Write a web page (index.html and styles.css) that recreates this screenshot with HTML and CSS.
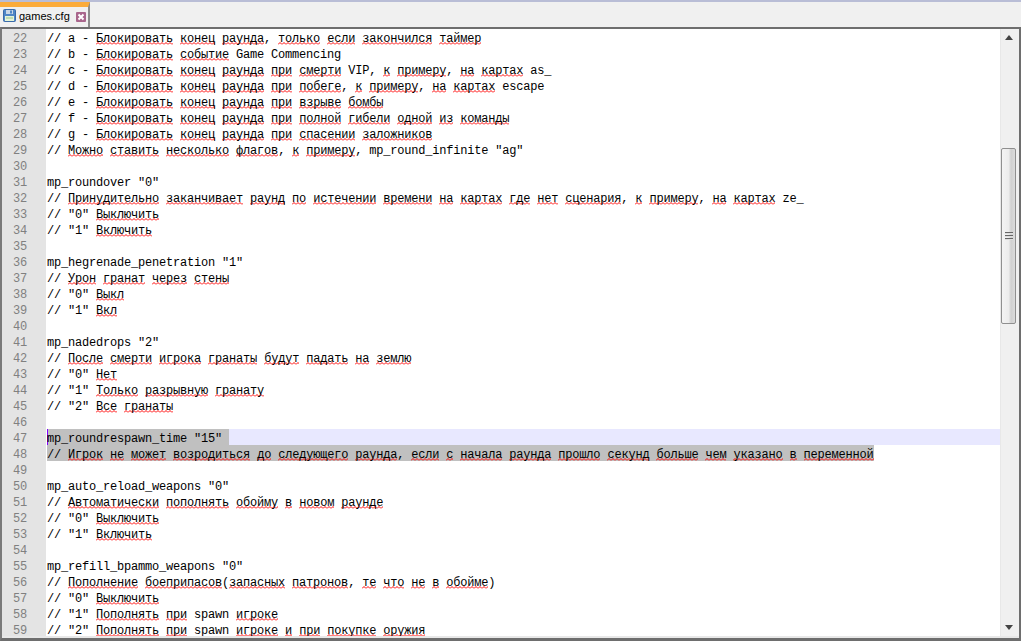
FILE: index.html
```html
<!DOCTYPE html>
<html lang="ru">
<head>
<meta charset="utf-8">
<title>games.cfg</title>
<link rel="stylesheet" href="styles.css">
</head>
<body>
<div class="app">
  <div class="tabbar">
    <div class="tab">
      <svg class="floppy" width="13" height="13" viewBox="0 0 13 13"><rect x="0.5" y="0.5" width="12" height="12" rx="1" fill="#4f86c6" stroke="#3a6aa8"/><rect x="3" y="1" width="7" height="4" fill="#c9d6e6"/><rect x="7" y="1.5" width="2" height="3" fill="#4f86c6"/><rect x="2" y="7" width="9" height="5" fill="#e4f3d8"/><rect x="3" y="8.5" width="7" height="1" fill="#9cc48a"/></svg>
      <span class="tabname">games.cfg</span>
      <svg class="close" width="10" height="10" viewBox="0 0 10 10"><rect width="10" height="10" rx="1" fill="#a9668c"/><path d="M2.500 2.500l5 5M7.500 2.500l-5 5" stroke="#fff" stroke-width="2"/></svg>
    </div>
  </div>
  <div class="editor">
    <div class="code">
      <div class="line"><span class="num">22</span><span class="txt">// a - <u>Блокировать</u> <u>конец</u> <u>раунда</u>, <u>только</u> <u>если</u> <u>закончился</u> <u>таймер</u></span></div>
      <div class="line"><span class="num">23</span><span class="txt">// b - <u>Блокировать</u> <u>событие</u> Game Commencing</span></div>
      <div class="line"><span class="num">24</span><span class="txt">// c - <u>Блокировать</u> <u>конец</u> <u>раунда</u> <u>при</u> <u>смерти</u> VIP, <u>к</u> <u>примеру</u>, <u>на</u> <u>картах</u> as_</span></div>
      <div class="line"><span class="num">25</span><span class="txt">// d - <u>Блокировать</u> <u>конец</u> <u>раунда</u> <u>при</u> <u>побеге</u>, <u>к</u> <u>примеру</u>, <u>на</u> <u>картах</u> escape</span></div>
      <div class="line"><span class="num">26</span><span class="txt">// e - <u>Блокировать</u> <u>конец</u> <u>раунда</u> <u>при</u> <u>взрыве</u> <u>бомбы</u></span></div>
      <div class="line"><span class="num">27</span><span class="txt">// f - <u>Блокировать</u> <u>конец</u> <u>раунда</u> <u>при</u> <u>полной</u> <u>гибели</u> <u>одной</u> <u>из</u> <u>команды</u></span></div>
      <div class="line"><span class="num">28</span><span class="txt">// g - <u>Блокировать</u> <u>конец</u> <u>раунда</u> <u>при</u> <u>спасении</u> <u>заложников</u></span></div>
      <div class="line"><span class="num">29</span><span class="txt">// <u>Можно</u> <u>ставить</u> <u>несколько</u> <u>флагов</u>, <u>к</u> <u>примеру</u>, mp_round_infinite "ag"</span></div>
      <div class="line"><span class="num">30</span><span class="txt"></span></div>
      <div class="line"><span class="num">31</span><span class="txt">mp_roundover "0"</span></div>
      <div class="line"><span class="num">32</span><span class="txt">// <u>Принудительно</u> <u>заканчивает</u> <u>раунд</u> <u>по</u> <u>истечении</u> <u>времени</u> <u>на</u> <u>картах</u> <u>где</u> <u>нет</u> <u>сценария</u>, <u>к</u> <u>примеру</u>, <u>на</u> <u>картах</u> ze_</span></div>
      <div class="line"><span class="num">33</span><span class="txt">// "0" <u>Выключить</u></span></div>
      <div class="line"><span class="num">34</span><span class="txt">// "1" <u>Включить</u></span></div>
      <div class="line"><span class="num">35</span><span class="txt"></span></div>
      <div class="line"><span class="num">36</span><span class="txt">mp_hegrenade_penetration "1"</span></div>
      <div class="line"><span class="num">37</span><span class="txt">// <u>Урон</u> <u>гранат</u> <u>через</u> <u>стены</u></span></div>
      <div class="line"><span class="num">38</span><span class="txt">// "0" <u>Выкл</u></span></div>
      <div class="line"><span class="num">39</span><span class="txt">// "1" <u>Вкл</u></span></div>
      <div class="line"><span class="num">40</span><span class="txt"></span></div>
      <div class="line"><span class="num">41</span><span class="txt">mp_nadedrops "2"</span></div>
      <div class="line"><span class="num">42</span><span class="txt">// <u>После</u> <u>смерти</u> <u>игрока</u> <u>гранаты</u> <u>будут</u> <u>падать</u> <u>на</u> <u>землю</u></span></div>
      <div class="line"><span class="num">43</span><span class="txt">// "0" <u>Нет</u></span></div>
      <div class="line"><span class="num">44</span><span class="txt">// "1" <u>Только</u> <u>разрывную</u> <u>гранату</u></span></div>
      <div class="line"><span class="num">45</span><span class="txt">// "2" <u>Все</u> <u>гранаты</u></span></div>
      <div class="line"><span class="num">46</span><span class="txt"></span></div>
      <div class="line current"><span class="num">47</span><span class="txt"><span class="sel caret">mp_roundrespawn_time "15" </span></span></div>
      <div class="line"><span class="num">48</span><span class="txt"><span class="sel">// <u>Игрок</u> <u>не</u> <u>может</u> <u>возродиться</u> <u>до</u> <u>следующего</u> <u>раунда</u>, <u>если</u> <u>с</u> <u>начала</u> <u>раунда</u> <u>прошло</u> <u>секунд</u> <u>больше</u> <u>чем</u> <u>указано</u> <u>в</u> <u>переменной</u></span></span></div>
      <div class="line"><span class="num">49</span><span class="txt"></span></div>
      <div class="line"><span class="num">50</span><span class="txt">mp_auto_reload_weapons "0"</span></div>
      <div class="line"><span class="num">51</span><span class="txt">// <u>Автоматически</u> <u>пополнять</u> <u>обойму</u> <u>в</u> <u>новом</u> <u>раунде</u></span></div>
      <div class="line"><span class="num">52</span><span class="txt">// "0" <u>Выключить</u></span></div>
      <div class="line"><span class="num">53</span><span class="txt">// "1" <u>Включить</u></span></div>
      <div class="line"><span class="num">54</span><span class="txt"></span></div>
      <div class="line"><span class="num">55</span><span class="txt">mp_refill_bpammo_weapons "0"</span></div>
      <div class="line"><span class="num">56</span><span class="txt">// <u>Пополнение</u> <u>боеприпасов</u>(<u>запасных</u> <u>патронов</u>, <u>те</u> <u>что</u> <u>не</u> <u>в</u> <u>обойме</u>)</span></div>
      <div class="line"><span class="num">57</span><span class="txt">// "0" <u>Выключить</u></span></div>
      <div class="line"><span class="num">58</span><span class="txt">// "1" <u>Пополнять</u> <u>при</u> spawn <u>игроке</u></span></div>
      <div class="line"><span class="num">59</span><span class="txt">// "2" <u>Пополнять</u> <u>при</u> spawn <u>игроке</u> <u>и</u> <u>при</u> <u>покупке</u> <u>оружия</u></span></div>
    </div>
    <div class="scrollbar">
      <div class="arrow"><svg width="8" height="5" viewBox="0 0 8 5"><path d="M4 0l4 5H0z" fill="#444"/></svg></div>
      <div class="thumb"><span class="grip"></span><span class="grip"></span><span class="grip"></span></div>
      <div class="arrow down"><svg width="8" height="5" viewBox="0 0 8 5"><path d="M0 0h8L4 5z" fill="#444"/></svg></div>
    </div>
  </div>
</div>
</body>
</html>
```
FILE: styles.css
```css
* { box-sizing: border-box; }
html, body { margin: 0; height: 641px; overflow: hidden; background: #fff; }
.app { display: flex; flex-direction: column; height: 641px; background: #f0f0f0; }
.tabbar { height: 27px; flex: none; border-top: 2px solid #b9bdd6; background: #f0f0f0; display: flex; }
.tab { width: 90px; height: 25px; display: flex; align-items: center; gap: 3px; padding: 0 0 4px 3px; border-top: 5px solid #fbab3a; border-right: 2px solid #8c8c8c; background: #f0f0f0; }
.floppy { flex: none; }
.tabname { font: 11px/14px "Liberation Sans", Arial, sans-serif; color: #000; margin-top: 2px; }
.close { flex: none; margin: 3px 0 0 3px; }
.editor { flex: 1; min-height: 0; display: flex; padding-bottom: 2px; border-top: 2px solid #6e6e6e; border-left: 2px solid #7a7a7a; border-right: 2px solid #6e6e6e; border-bottom: 3px solid #6e6e6e; background: #e8e8e8; overflow: hidden; }
.code { flex: 1; min-width: 0; overflow: hidden; margin-right: 1px; background: #fff; }
.line { display: flex; height: 16px; font: 12px/20px "Liberation Mono", "Courier New", monospace; letter-spacing: -0.2px; color: #000; white-space: pre; }
.num { flex: none; width: 44px; padding-right: 19px; text-align: right; background: #e4e4e4; color: #808080; }
.txt { flex: 1; display: block; height: 16px; margin-left: 1px; }
.current .txt { background: #e8e8ff; }
.sel { display: inline-block; vertical-align: top; height: 16px; background: #c0c0c0; }
.caret { box-shadow: inset 1px 0 0 #8000ff; }
u { display: inline-block; vertical-align: top; height: 16px; text-decoration: none; background: url("data:image/svg+xml,%3Csvg xmlns='http://www.w3.org/2000/svg' width='4' height='3'%3E%3Cpath d='M0 2.5L2 .5 4 2.500' fill='none' stroke='%23f00' stroke-width='1'/%3E%3C/svg%3E") 0 100% repeat-x; }
.scrollbar { flex: none; width: 18px; display: flex; flex-direction: column; background: #f0f0f0; }
.arrow { height: 16px; flex: none; display: flex; align-items: center; justify-content: center; width: 15px; padding-top: 1px; }
.arrow.down { margin-top: auto; padding: 0 0 2px; }
.thumb { flex: none; width: 15px; height: 176px; margin-top: 103px; display: flex; flex-direction: column; align-items: center; justify-content: center; gap: 1px; border: 1px solid #8f8f8f; border-radius: 2px; background: linear-gradient(90deg, #f3f3f3 0%, #ececec 50%, #d0d0d0 70%, #dcdcdc 100%); }
.grip { display: block; width: 8px; height: 2px; background: #666; border-bottom: 1px solid #ddd; }
```
